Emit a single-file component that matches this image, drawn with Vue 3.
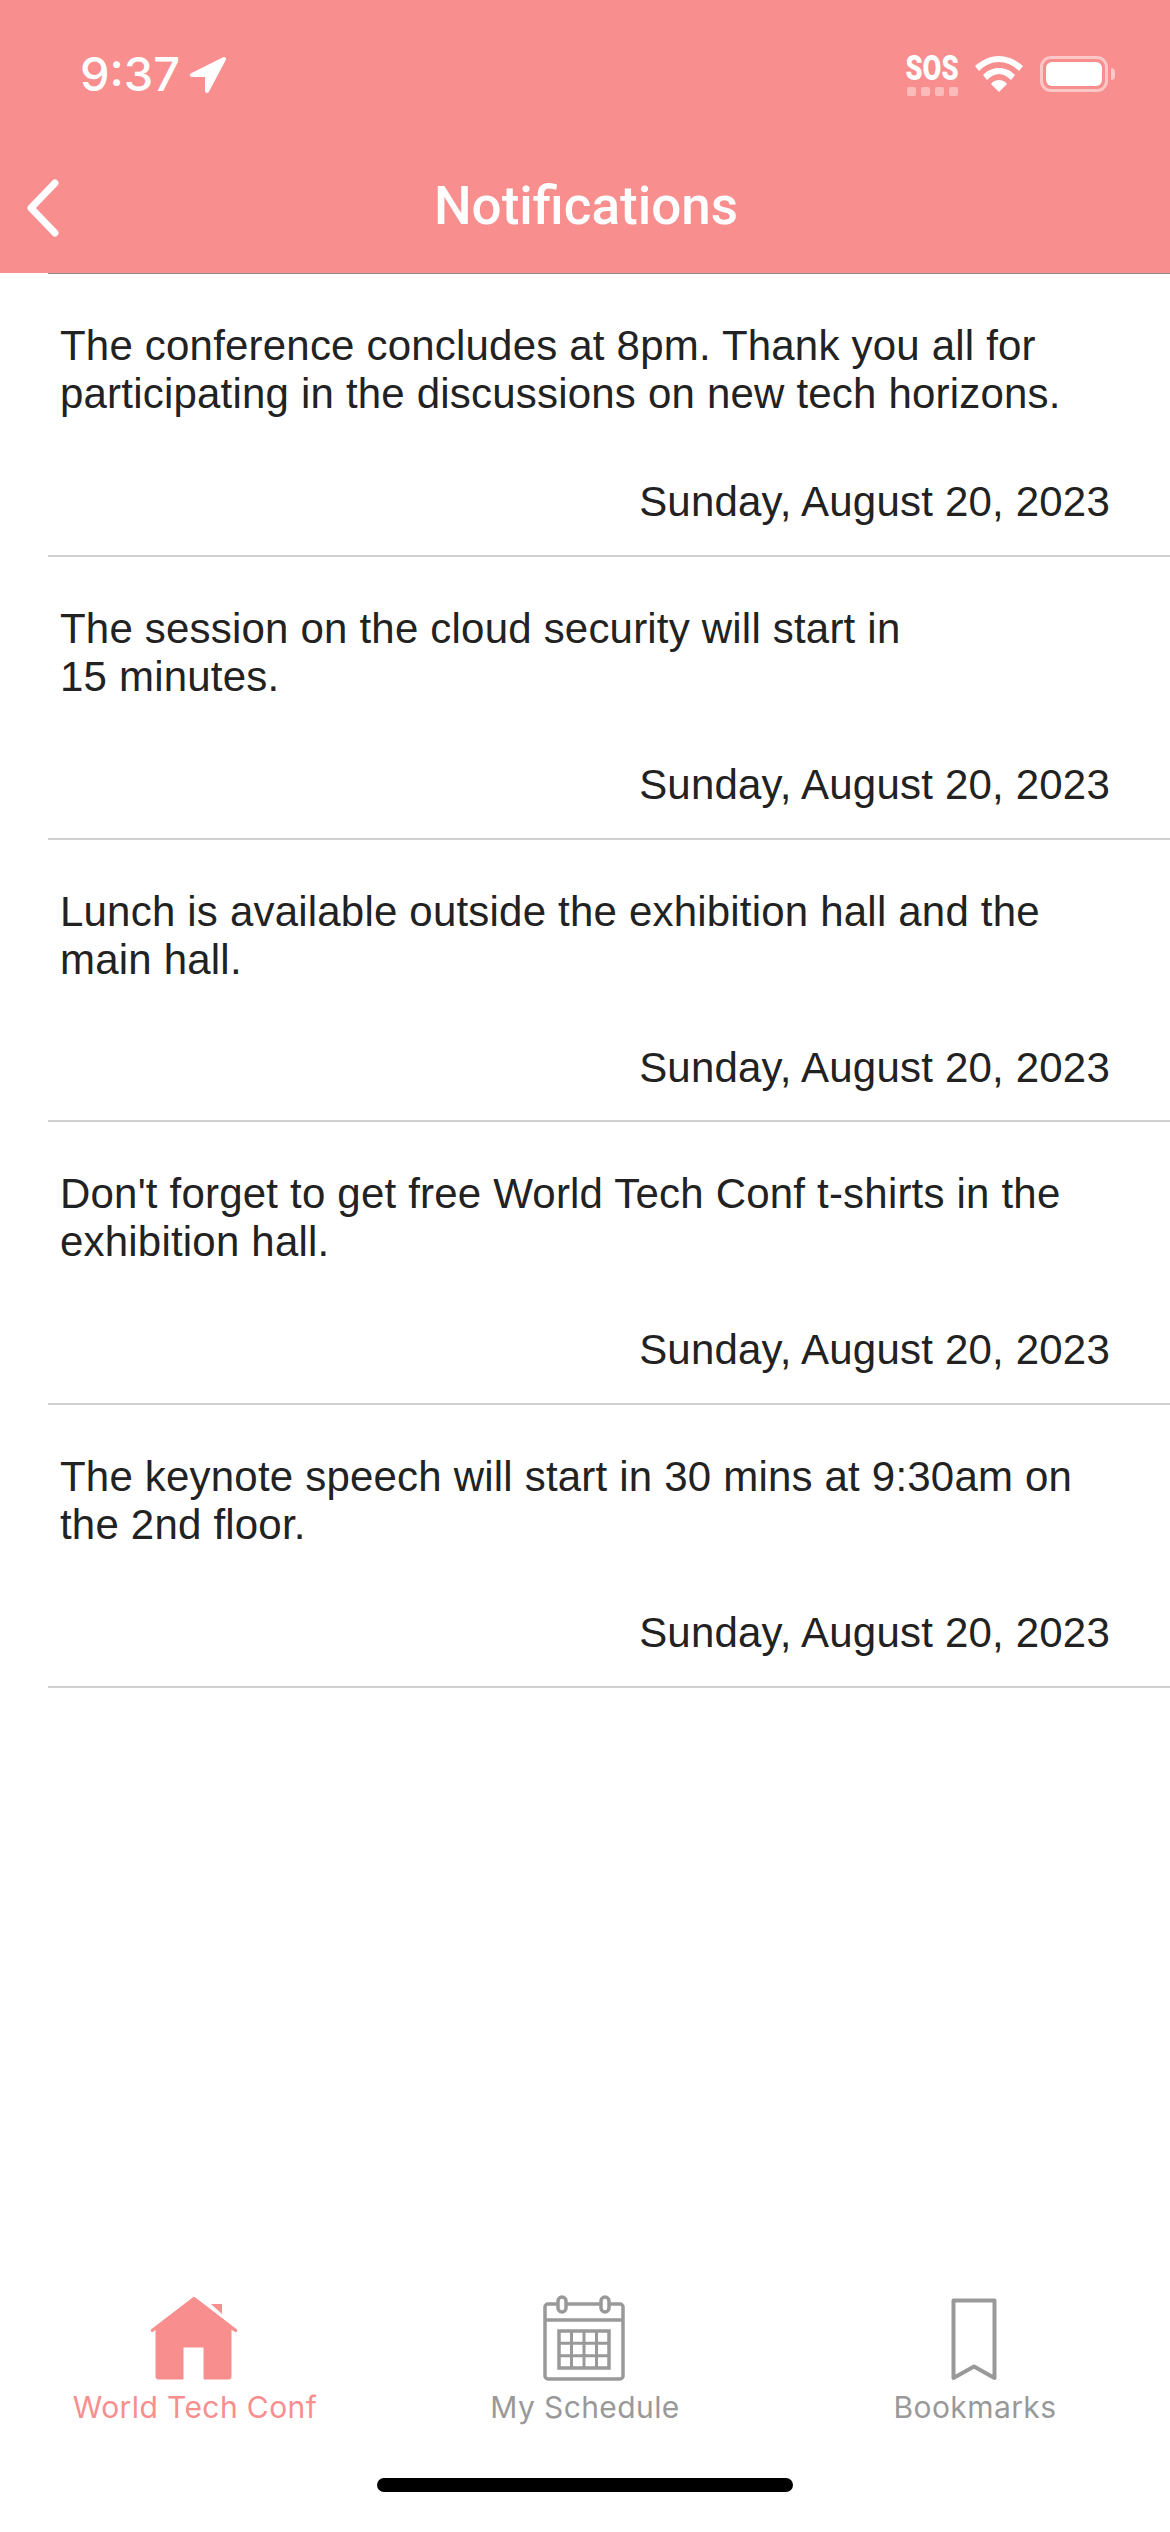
<script setup>
const notifications = [
  "The conference concludes at 8pm. Thank you all for participating in the discussions on new tech horizons.",
  "The session on the cloud security will start in 15\u00a0minutes.",
  "Lunch is available outside the exhibition hall and the main hall.",
  "Don't forget to get free World Tech Conf t-shirts in the exhibition hall.",
  "The keynote speech will start in 30 mins at 9:30am on the 2nd floor.",
];
</script>

<template>
  <div class="screen">
    <header class="top">
      <div class="status">
        <div class="status-left">
          <span class="time">9:37</span>
          <svg class="arrow" width="37" height="37" viewBox="0 0 37 37">
            <path d="M34 3 L2 19 H17 V35 Z" fill="#fff" stroke="#fff" stroke-width="4" stroke-linejoin="round" />
          </svg>
        </div>
        <div class="status-right">
          <div class="sos">
            <span class="sos-text">SOS</span>
            <div class="dots"><i></i><i></i><i></i><i></i></div>
          </div>
          <svg class="wifi" width="48" height="36" viewBox="0 0 48 36">
            <path d="M24 0 C33 0 41 4 48 10 L44 15 C38 9 31 6 24 6 C17 6 10 9 4 15 L0 10 C7 4 15 0 24 0 Z" fill="#fff" />
            <path d="M24 12 C30 12 35 14 40 19 L36 24 C32 20 28 18 24 18 C20 18 16 20 12 24 L8 19 C13 14 18 12 24 12 Z" fill="#fff" />
            <path d="M24 24 C27 24 30 25 32 28 L24 36 L16 28 C18 25 21 24 24 24 Z" fill="#fff" />
          </svg>
          <div class="battery"><div class="battery-fill"></div></div>
          <div class="battery-nub"></div>
        </div>
      </div>
      <div class="nav">
        <svg class="back" width="40" height="64" viewBox="0 0 40 64">
          <path d="M33 7 L9 32 L33 57" fill="none" stroke="#fff" stroke-width="7" stroke-linecap="round" stroke-linejoin="round" />
        </svg>
        <h1 class="title">Notifications</h1>
      </div>
    </header>

    <main class="list">
      <div v-for="(text, i) in notifications" :key="i" class="row">
        <p class="message">{{ text }}</p>
        <p class="date">Sunday, August 20, 2023</p>
      </div>
    </main>

    <footer class="tabs">
      <div class="tab active">
        <svg width="100" height="96" viewBox="0 0 100 96">
          <path d="M66 14 H77 V24 Z" fill="#f98e8e" />
          <path d="M49 7 L92 40 L91 42 L86 39 V87 Q86 89 84 89 H59 V57 H38 V89 H13 Q11 89 11 87 V39 L7 42 L6 40 Z" fill="#f98e8e" stroke="#f98e8e" stroke-width="1" stroke-linejoin="round" />
        </svg>
        <span class="label">World Tech Conf</span>
      </div>
      <div class="tab">
        <svg width="100" height="96" viewBox="0 0 100 96" fill="none" stroke="#999" stroke-width="3.5">
          <rect x="10" y="14" width="78" height="75" rx="3" />
          <path d="M10 30 H88" />
          <rect x="23" y="7" width="8" height="15" rx="4" fill="#fff" />
          <rect x="66" y="7" width="8" height="15" rx="4" fill="#fff" />
          <rect x="24" y="41" width="50" height="37" />
          <path d="M36.5 41 V78 M49 41 V78 M61.5 41 V78 M24 53.3 H74 M24 65.7 H74" stroke-width="3" />
        </svg>
        <span class="label">My Schedule</span>
      </div>
      <div class="tab">
        <svg width="100" height="96" viewBox="0 0 100 96">
          <path d="M28.5 10.5 H69.5 V88 L49 76.5 L28.5 88 Z" fill="none" stroke="#999" stroke-width="4" stroke-linejoin="round" />
        </svg>
        <span class="label">Bookmarks</span>
      </div>
    </footer>
    <div class="home-bar"><div class="pill"></div></div>
  </div>
</template>

<style>
html,
body {
  margin: 0;
  background: #fff;
}
</style>

<style scoped>
.screen {
  width: 1170px;
  height: 2532px;
  display: flex;
  flex-direction: column;
  background: #fff;
  font-family: "Liberation Sans", Arial, sans-serif;
  overflow: hidden;
}

.top {
  height: 273px;
  background: #f98e8e;
  color: #fff;
}

.status {
  height: 147px;
  box-sizing: border-box;
  padding: 48px 55px 0 80px;
  display: flex;
  justify-content: space-between;
  align-items: flex-start;
}

.status-left {
  display: flex;
  align-items: center;
  gap: 10px;
}

.time {
  font-family: Inter, sans-serif;
  font-size: 47px;
  line-height: 52px;
  font-weight: 500;
}

.status-right {
  display: flex;
  align-items: flex-start;
  padding-top: 8px;
}

.sos {
  width: 54px;
  margin-right: 16px;
  display: flex;
  flex-direction: column;
  align-items: center;
}

.sos-text {
  font-family: Roboto, sans-serif;
  font-size: 35px;
  line-height: 26px;
  font-weight: 900;
  transform: scaleX(0.78);
}

.dots {
  margin-top: 5px;
  display: flex;
  gap: 5px;
}

.dots i {
  width: 9px;
  height: 9px;
  border-radius: 2px;
  background: rgba(255, 255, 255, 0.4);
}

.wifi {
  margin-right: 17px;
}

.battery {
  width: 68px;
  height: 36px;
  box-sizing: border-box;
  border: 3px solid rgba(255, 255, 255, 0.5);
  border-radius: 11px;
  padding: 3px;
}

.battery-fill {
  height: 100%;
  background: #fff;
  border-radius: 6px;
}

.battery-nub {
  width: 4px;
  height: 12px;
  margin: 12px 0 0 3px;
  background: rgba(255, 255, 255, 0.5);
  border-radius: 0 4px 4px 0;
}

.nav {
  height: 126px;
  position: relative;
  display: flex;
  align-items: center;
  justify-content: center;
}

.back {
  position: absolute;
  left: 22px;
  top: 29px;
}

.title {
  margin: 0 0 8px 2px;
  font-family: Roboto, sans-serif;
  font-size: 53px;
  font-weight: 500;
  line-height: 60px;
}

.list {
  flex: 1;
  border-top: 1px solid #8a8a8a;
  margin-left: 48px;
}

.row {
  height: 282.75px;
  box-sizing: border-box;
  padding: 48px 60px 0 12px;
  border-bottom: 2px solid #d0d0d0;
  color: #222;
}

.message {
  margin: 0;
  height: 156px;
  font-size: 42px;
  line-height: 48px;
  letter-spacing: 0.2px;
}

.date {
  margin: 0;
  font-size: 42px;
  line-height: 48px;
  letter-spacing: 0.2px;
  text-align: right;
}

.tabs {
  display: grid;
  grid-template-columns: repeat(3, 1fr);
}

.tab {
  display: flex;
  flex-direction: column;
  align-items: center;
  color: #999;
}

.tab.active {
  color: #f98e8e;
}

.label {
  margin-top: 3px;
  font-family: Inter, sans-serif;
  font-size: 30px;
  line-height: 36px;
  letter-spacing: 0.4px;
}

.home-bar {
  height: 107px;
  box-sizing: border-box;
  padding-top: 53px;
  display: flex;
  justify-content: center;
}

.pill {
  width: 416px;
  height: 14px;
  border-radius: 7px;
  background: #000;
}
</style>
